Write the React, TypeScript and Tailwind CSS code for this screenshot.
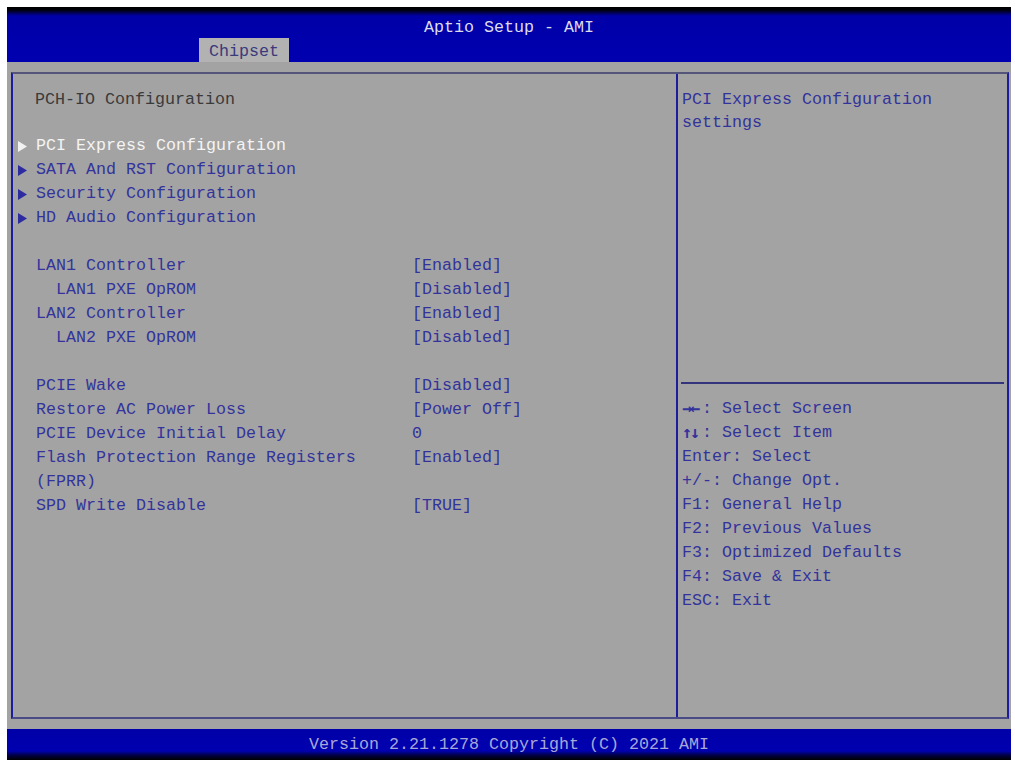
import React from "react";

const Tri = ({ color }: { color: string }) => (
  <svg width="9" height="11" viewBox="0 0 9 11" className="block">
    <polygon points="0,0 9,5.5 0,11" fill={color} />
  </svg>
);

type Row = { label: string; value?: string; indent?: boolean; label2?: string };

const settings1: Row[] = [
  { label: "LAN1 Controller", value: "[Enabled]" },
  { label: "LAN1 PXE OpROM", value: "[Disabled]", indent: true },
  { label: "LAN2 Controller", value: "[Enabled]" },
  { label: "LAN2 PXE OpROM", value: "[Disabled]", indent: true },
];

const settings2: Row[] = [
  { label: "PCIE Wake", value: "[Disabled]" },
  { label: "Restore AC Power Loss", value: "[Power Off]" },
  { label: "PCIE Device Initial Delay", value: "0" },
  { label: "Flash Protection Range Registers", value: "[Enabled]", label2: "(FPRR)" },
  { label: "SPD Write Disable", value: "[TRUE]" },
];

const menus = [
  "PCI Express Configuration",
  "SATA And RST Configuration",
  "Security Configuration",
  "HD Audio Configuration",
];

const help: [string, string][] = [
  ["→←", ": Select Screen"],
  ["↑↓", ": Select Item"],
  ["", "Enter: Select"],
  ["", "+/-: Change Opt."],
  ["", "F1: General Help"],
  ["", "F2: Previous Values"],
  ["", "F3: Optimized Defaults"],
  ["", "F4: Save & Exit"],
  ["", "ESC: Exit"],
];

function SettingRow({ r }: { r: Row }) {
  return (
    <div className="flex">
      <div className="w-[18px] shrink-0" />
      <div className={`w-[376px] shrink-0 ${r.indent ? "pl-[20px]" : ""}`}>
        <div className="h-[24px] whitespace-pre">{r.label}</div>
        {r.label2 && <div className="h-[24px] whitespace-pre">{r.label2}</div>}
      </div>
      <div className="h-[24px] whitespace-pre">{r.value}</div>
    </div>
  );
}

export default function App() {
  return (
    <div
      className="w-[1015px] h-[765px] bg-white pt-[7px] pl-[7px] overflow-hidden text-[16.67px] leading-[24px]"
      style={{ fontFamily: '"Liberation Mono", "DejaVu Sans Mono", monospace' }}
    >
      <div className="w-[1004px] h-[753px] flex flex-col bg-[#a3a3a3]">
        {/* Header */}
        <div className="h-[55px] flex flex-col bg-[linear-gradient(to_bottom,#000000_0px,#00000a_3px,#0000a8_9px,#0000b0_100%)]">
          <div className="h-[31px] pt-[9px] text-center text-[#dcdcec]">Aptio Setup - AMI</div>
          <div className="ml-[192px] w-[90px] h-[24px] bg-[#b2b2b2] text-[#3a3a7c] text-center leading-[25px] pt-[1px]">
            Chipset
          </div>
        </div>

        {/* Middle */}
        <div className="flex-1 flex flex-col pt-[10px] pb-[10px] pl-[4px] pr-[2px]">
          <div className="flex-1 flex border-2 border-t-[#55557c] border-l-[#1c1c9c] border-r-[#1c1c9c] border-b-[#4a4a86]">
            {/* Left column */}
            <div className="w-[663px] shrink-0 pl-[5px] pt-[14px] text-[#33339c]">
              <div className="flex">
                <div className="w-[17px] shrink-0" />
                <div className="text-[#3a3a3a] whitespace-pre">PCH-IO Configuration</div>
              </div>
              <div className="mt-[22px]">
                {menus.map((m, i) => (
                  <div key={m} className="flex items-center h-[24px]">
                    <div className="w-[18px] shrink-0 flex items-center">
                      <Tri color={i === 0 ? "#f2f2f2" : "#2c2ca0"} />
                    </div>
                    <div className={`whitespace-pre ${i === 0 ? "text-[#f4f4f4]" : ""}`}>{m}</div>
                  </div>
                ))}
              </div>
              <div className="h-[24px]" />
              {settings1.map((r) => (
                <SettingRow key={r.label} r={r} />
              ))}
              <div className="h-[24px]" />
              {settings2.map((r) => (
                <SettingRow key={r.label} r={r} />
              ))}
            </div>

            {/* Right column */}
            <div className="flex-1 flex flex-col border-l-2 border-[#1c1c9c] text-[#33339c]">
              <div className="h-[308px] pl-[4px] pt-[14px]">
                <div className="whitespace-pre">PCI Express Configuration</div>
                <div className="whitespace-pre -mt-[1px]">settings</div>
              </div>
              <div className="h-[2px] mx-[3px] bg-[#34347c]" />
              <div className="pl-[4px] pt-[13px]">
                {help.map(([a, h]) => (
                  <div key={h} className="h-[24px] whitespace-pre flex">
                    {a && (
                      <span
                        className="inline-block w-[20px] overflow-hidden tracking-[-2px] font-bold"
                        style={{ fontFamily: '"DejaVu Sans Mono", monospace' }}
                      >
                        {a}
                      </span>
                    )}
                    <span>{h}</span>
                  </div>
                ))}
              </div>
            </div>
          </div>
        </div>

        {/* Footer */}
        <div className="h-[31px] pt-[4px] text-center text-[#a8a8d8] bg-[linear-gradient(to_bottom,#0000a8_0px,#0000b0_22px,#00004a_26px,#000000_31px)]">
          Version 2.21.1278 Copyright (C) 2021 AMI
        </div>
      </div>
    </div>
  );
}
